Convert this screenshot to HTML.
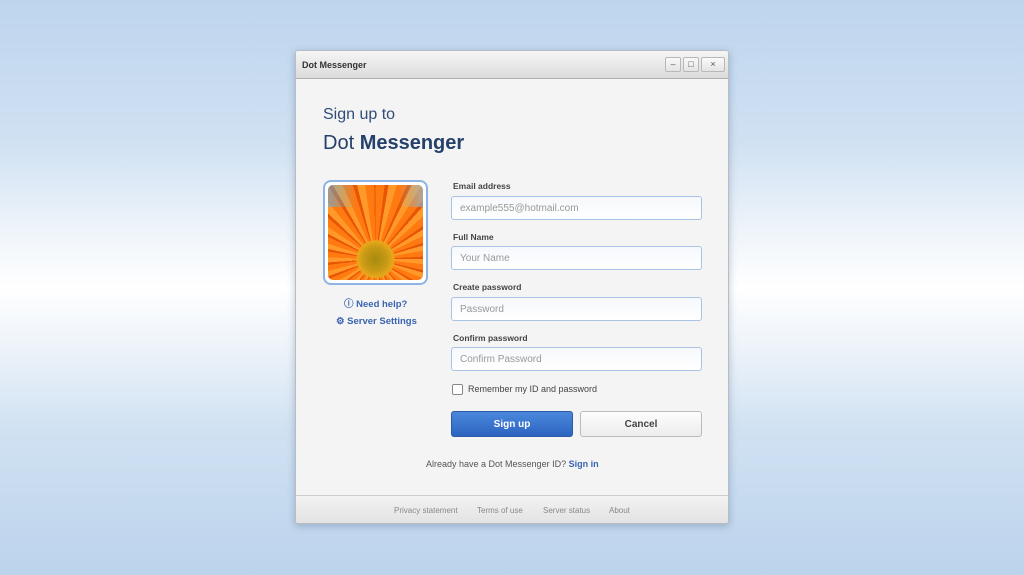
<!DOCTYPE html>
<html><head><style>
*{margin:0;padding:0;box-sizing:border-box}
body{width:1024px;height:575px;overflow:hidden;font-family:"Liberation Sans",sans-serif;
background:linear-gradient(180deg,#bed5ee 0%,#d0e1f2 25%,#eef4fa 40%,#ffffff 50%,#eef4fa 60%,#d0e1f2 75%,#bcd3ec 100%);position:relative}
.win{position:absolute;left:295px;top:50px;width:434px;height:474px;background:#f4f4f4;border:1px solid #b9bcc0;border-radius:3px;box-shadow:0 2px 8px rgba(60,90,130,.35);overflow:hidden}
.tb{height:28px;background:linear-gradient(#f5f5f5,#dcdcdc);border-bottom:1px solid #b0b0b0;position:relative}
.tb span{position:absolute;left:6px;top:9px;font-size:9px;font-weight:bold;color:#333}
.bt{position:absolute;top:6px;height:15px;border:1px solid #b8b8b8;border-radius:2px;background:linear-gradient(#fafafa,#e4e4e4);font-size:9px;color:#555;text-align:center;line-height:13px}
.abs{position:absolute}
.h1{left:27px;top:55px;font-size:16px;color:#2f4d78}
.h2{left:27px;top:81px;font-size:20px;color:#25406a}
.pic{left:27px;top:129px;width:105px;height:105px;border:2px solid #8db4e2;border-radius:8px;background:#fff;padding:3px}
.flower{width:100%;height:100%;border-radius:5px;overflow:hidden;position:relative;
background:radial-gradient(circle at 50% 78%,#a88a10 0,#c89a15 12px,#e8a81a 18px,transparent 20px),
repeating-conic-gradient(from 0deg at 50% 78%,#ff7a10 0deg 7deg,#e85505 7deg 10deg,#ff9a2a 10deg 16deg),#ff7a10}
.flower:before{content:"";position:absolute;left:0;top:0;width:100%;height:22px;background:linear-gradient(90deg,#5ab0e8,transparent 30%,transparent 75%,#7cc0ee);opacity:.6}
.lnk{font-size:9.5px;font-weight:bold;color:#3a64b0}
.lbl{left:157px;font-size:8.5px;font-weight:bold;color:#444}
.inp{left:155px;width:251px;height:24px;border:1px solid #a9c3e6;border-radius:3px;background:linear-gradient(#f6f8fc,#fff);font-size:10px;color:#999;padding:6px 8px}
.btn{top:360px;height:26px;border-radius:3px;font-size:10px;font-weight:bold;text-align:center;line-height:25px}
.foot{left:0;top:444px;width:100%;height:30px;border-top:1px solid #ccc;background:linear-gradient(#f2f2f2,#e2e2e2);font-size:8px;color:#888}
.foot span{position:absolute;top:10px}
</style></head><body>
<div class="win">
 <div class="tb"><span>Dot Messenger</span>
  <div class="bt" style="left:369px;width:16px">–</div>
  <div class="bt" style="left:387px;width:16px">□</div>
  <div class="bt" style="left:405px;width:24px">×</div>
 </div>
 <div class="abs h1">Sign up to</div>
 <div class="abs h2">Dot <b>Messenger</b></div>
 <div class="abs pic"><div class="flower"></div></div>
 <div class="abs lnk" style="left:48px;top:245px">ⓘ Need help?</div>
 <div class="abs lnk" style="left:40px;top:265px">⚙ Server Settings</div>
 <div class="abs lbl" style="top:130px">Email address</div>
 <div class="abs inp" style="top:145px">example555@hotmail.com</div>
 <div class="abs lbl" style="top:181px">Full Name</div>
 <div class="abs inp" style="top:195px">Your Name</div>
 <div class="abs lbl" style="top:231px">Create password</div>
 <div class="abs inp" style="top:246px">Password</div>
 <div class="abs lbl" style="top:282px">Confirm password</div>
 <div class="abs inp" style="top:296px">Confirm Password</div>
 <div class="abs" style="left:156px;top:333px;width:11px;height:11px;border:1px solid #888;border-radius:2px;background:#fff"></div>
 <div class="abs" style="left:172px;top:333px;font-size:9px;color:#444">Remember my ID and password</div>
 <div class="abs btn" style="left:155px;width:122px;background:linear-gradient(#4b88dc,#2c64c0);border:1px solid #2a5aa8;color:#fff">Sign up</div>
 <div class="abs btn" style="left:284px;width:122px;background:linear-gradient(#fdfdfd,#ececec);border:1px solid #bbb;color:#444">Cancel</div>
 <div class="abs" style="left:130px;top:408px;font-size:9px;color:#555">Already have a Dot Messenger ID? <b style="color:#3a64b0">Sign in</b></div>
 <div class="abs foot"><span style="left:98px">Privacy statement</span><span style="left:181px">Terms of use</span><span style="left:247px">Server status</span><span style="left:313px">About</span></div>
</div>
</body></html>
